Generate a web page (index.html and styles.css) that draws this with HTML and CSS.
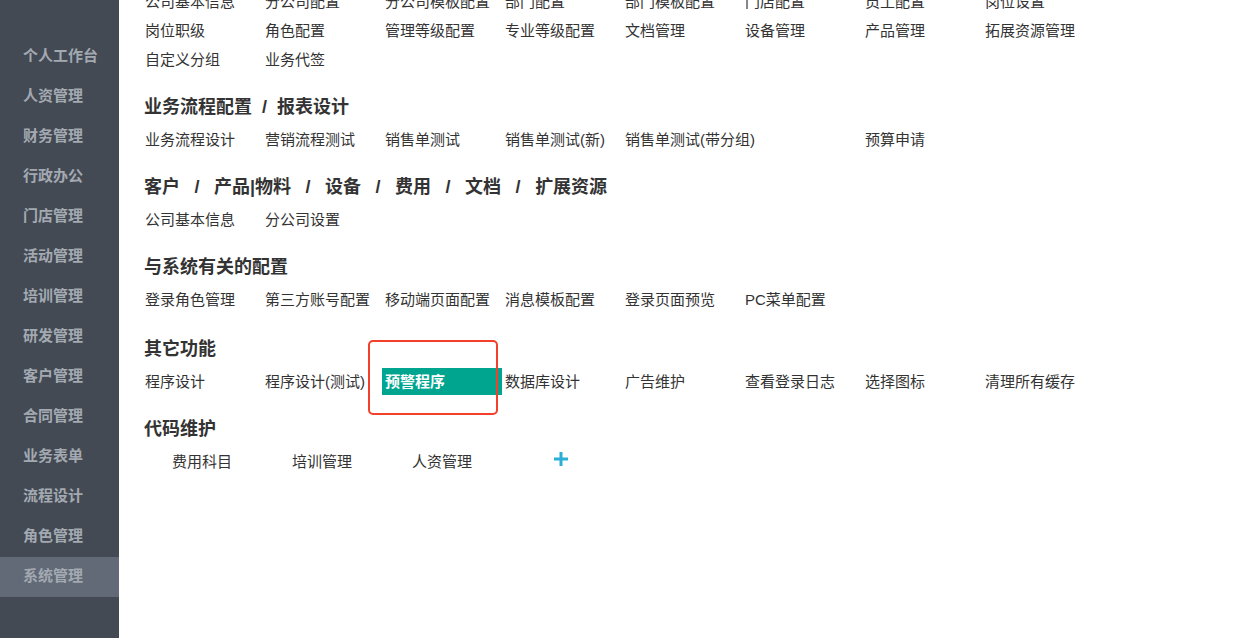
FILE: index.html
```html
<!DOCTYPE html>
<html lang="zh-CN">
<head>
    <meta charset="UTF-8">
    <title>系统管理</title>
    <link rel="stylesheet" href="styles.css">
</head>
<body>
    <div class="layout">
        <div class="sidebar">
            <div class="nav-item">个人工作台</div>
            <div class="nav-item">人资管理</div>
            <div class="nav-item">财务管理</div>
            <div class="nav-item">行政办公</div>
            <div class="nav-item">门店管理</div>
            <div class="nav-item">活动管理</div>
            <div class="nav-item">培训管理</div>
            <div class="nav-item">研发管理</div>
            <div class="nav-item">客户管理</div>
            <div class="nav-item">合同管理</div>
            <div class="nav-item">业务表单</div>
            <div class="nav-item">流程设计</div>
            <div class="nav-item">角色管理</div>
            <div class="nav-item active">系统管理</div>
        </div>

        <div class="main">
            <div class="section first">
                <div class="links">
                    <a>公司基本信息</a><a>分公司配置</a><a>分公司模板配置</a><a>部门配置</a>
                    <a>部门模板配置</a><a>门店配置</a><a>员工配置</a><a>岗位设置</a>
                    <a>岗位职级</a><a>角色配置</a><a>管理等级配置</a><a>专业等级配置</a>
                    <a>文档管理</a><a>设备管理</a><a>产品管理</a><a>拓展资源管理</a>
                    <a>自定义分组</a><a>业务代签</a>
                </div>
            </div>

            <div class="section">
                <h3>业务流程配置<span class="sep">/</span>报表设计</h3>
                <div class="links">
                    <a>业务流程设计</a><a>营销流程测试</a><a>销售单测试</a><a>销售单测试(新)</a>
                    <a>销售单测试(带分组)</a><a></a><a>预算申请</a>
                </div>
            </div>

            <div class="section">
                <h3>客户<span class="sep wide">/</span>产品|物料<span class="sep wide">/</span>设备<span class="sep wide">/</span>费用<span class="sep wide">/</span>文档<span class="sep wide">/</span>扩展资源</h3>
                <div class="links">
                    <a>公司基本信息</a><a>分公司设置</a>
                </div>
            </div>

            <div class="section">
                <h3>与系统有关的配置</h3>
                <div class="links">
                    <a>登录角色管理</a><a>第三方账号配置</a><a>移动端页面配置</a><a>消息模板配置</a>
                    <a>登录页面预览</a><a>PC菜单配置</a>
                </div>
            </div>

            <div class="section other">
                <h3>其它功能</h3>
                <div class="links">
                    <a>程序设计</a><a>程序设计(测试)</a>
                    <a class="current">预警程序<span class="mark"></span></a>
                    <a>数据库设计</a><a>广告维护</a><a>查看登录日志</a><a>选择图标</a><a>清理所有缓存</a>
                </div>
            </div>

            <div class="section">
                <h3>代码维护</h3>
                <div class="links code">
                    <a>费用科目</a><a>培训管理</a><a>人资管理</a>
                    <span class="add">
                        <svg width="14" height="14" viewBox="0 0 14 14"><path d="M5.5 0h3v5.5H14v3H8.5V14h-3V8.5H0v-3h5.5z" fill="#2bafd7"/></svg>
                    </span>
                </div>
            </div>
        </div>
    </div>
</body>
</html>
```

FILE: styles.css
```css
html, body {
    margin: 0;
    height: 100%;
    overflow: hidden;
}
body {
    font-family: "Helvetica Neue", "Liberation Sans", "Noto Sans CJK SC", sans-serif;
    background: #fff;
    color: #333;
}
.layout {
    display: flex;
    height: 100%;
}
.sidebar {
    width: 119px;
    flex-shrink: 0;
    background: #434a54;
    padding-top: 37px;
    box-sizing: border-box;
}
.nav-item {
    height: 40px;
    line-height: 38px;
    padding-left: 23px;
    font-size: 15px;
    font-weight: bold;
    color: #a3a9b1;
}
.nav-item.active {
    background: #626a78;
}
.main {
    flex: 1;
    padding-left: 23px;
}
.section {
    margin-bottom: 21px;
}
.section.first {
    margin-top: -13.5px;
}
.section.other {
    margin-top: 23px;
}
.section h3 {
    margin: 0 0 5px 0;
    padding-left: 2px;
    font-size: 18px;
    line-height: 25px;
    font-weight: bold;
    color: #333;
}
.sep {
    margin: 0 10px;
}
.sep.wide {
    margin: 0 14.5px;
}
.links {
    display: grid;
    grid-template-columns: repeat(8, 120px);
    font-size: 15px;
    line-height: 29px;
}
.links a {
    display: block;
    padding-left: 3px;
    white-space: nowrap;
    color: #333;
}
.links a.current {
    position: relative;
    background: #00a58f;
    color: #fff;
    font-weight: bold;
    height: 27px;
    line-height: 27px;
    margin-top: 1px;
}
.mark {
    position: absolute;
    left: -14px;
    top: -28px;
    width: 126px;
    height: 71px;
    border: 2px solid #f4402b;
    border-radius: 5px;
}
.links.code {
    padding-left: 27px;
    grid-template-columns: 120px 120px 120px 60px;
}
.add {
    display: flex;
    align-items: center;
    padding-left: 25px;
    height: 25px;
}
```
